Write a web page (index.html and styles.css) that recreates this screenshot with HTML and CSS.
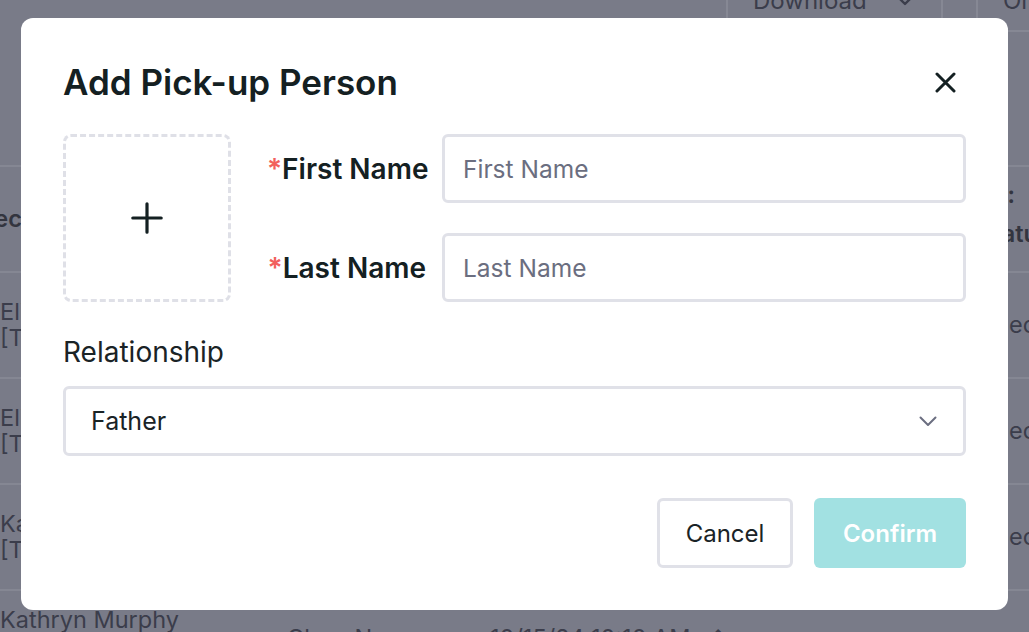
FILE: index.html
```html
<!DOCTYPE html>
<html lang="en">
<head>
<meta charset="utf-8">
<title>Add Pick-up Person</title>
<link rel="stylesheet" href="styles.css">
</head>
<body>
<div class="page" aria-hidden="true">
  <div class="toolbar">
    <div class="tb-btn download"><span>Download</span>
      <svg class="tb-chev" width="20" height="12" viewBox="0 0 20 12"><path d="M2 2 L10 10 L18 2" fill="none" stroke="#3b3d4b" stroke-width="2.4" stroke-linecap="round" stroke-linejoin="round"/></svg>
    </div>
    <div class="tb-btn other"><span>Order</span></div>
  </div>
  <div class="table">
    <div class="row head">
      <div class="c-name"><span class="shift">Selected</span></div>
      <div class="c-class">Class</div>
      <div class="c-time">Time</div>
      <div class="c-status">
        <div class="h-line1">Date:</div>
        <div>Status</div>
      </div>
    </div>
    <div class="row">
      <div class="c-name">Eliza Brown<br>[Teacher]</div>
      <div class="c-class">Class A</div>
      <div class="c-time">10/15/24</div>
      <div class="c-status">Checked</div>
    </div>
    <div class="row">
      <div class="c-name">Eliza Brown<br>[Teacher]</div>
      <div class="c-class">Class A</div>
      <div class="c-time">10/15/24</div>
      <div class="c-status">Checked</div>
    </div>
    <div class="row">
      <div class="c-name">Kathryn Lee<br>[Teacher]</div>
      <div class="c-class">Class A</div>
      <div class="c-time">10/15/24</div>
      <div class="c-status">Checked</div>
    </div>
    <div class="row last">
      <div class="c-name">Kathryn Murphy<br>[Teacher]</div>
      <div class="c-class low">Class Name</div>
      <div class="c-time low">10/15/24 10:10 AM</div>
      <div class="c-icon low">&#8963;</div>
    </div>
  </div>
</div>

<div class="overlay">
  <div class="modal" role="dialog" aria-labelledby="dlg-title">
    <div class="modal-head">
      <h1 class="title" id="dlg-title">Add Pick-up Person</h1>
      <button class="close" type="button" aria-label="Close">
        <svg width="21" height="21" viewBox="0 0 21 21"><path d="M2 2 L19 19 M19 2 L2 19" fill="none" stroke="#142022" stroke-width="3" stroke-linecap="round"/></svg>
      </button>
    </div>

    <div class="identity">
      <div class="photo">
        <svg width="32" height="32" viewBox="0 0 32 32"><path d="M16 1.8 V30.2 M1.8 16 H30.2" fill="none" stroke="#142022" stroke-width="3.2" stroke-linecap="round"/></svg>
      </div>
      <div class="name-fields">
        <label class="label" for="fn"><span class="req">*</span>First Name</label>
        <input class="input" id="fn" type="text" placeholder="First Name">
        <label class="label" for="ln"><span class="req">*</span>Last Name</label>
        <input class="input" id="ln" type="text" placeholder="Last Name">
      </div>
    </div>

    <div class="rel-label">Relationship</div>
    <div class="select">
      <span>Father</span>
      <svg width="18" height="11" viewBox="0 0 18 11"><path d="M1.5 1.5 L9 9 L16.5 1.5" fill="none" stroke="#6b6e80" stroke-width="2" stroke-linecap="round" stroke-linejoin="round"/></svg>
    </div>

    <div class="actions">
      <button class="btn cancel" type="button">Cancel</button>
      <button class="btn confirm" type="button">Confirm</button>
    </div>
  </div>
</div>
</body>
</html>
```

FILE: styles.css
```css
* { box-sizing: border-box; }

body {
  margin: 0;
  width: 1029px;
  height: 632px;
  overflow: hidden;
  position: relative;
  background: #797b88;
  font-family: Inter, "Noto Sans", "Liberation Sans", sans-serif;
}

/* dimmed page behind the dialog */
.page {
  height: 632px;
  overflow: hidden;
  color: #3b3d4b;
  font-size: 23.5px;
}

.toolbar {
  display: flex;
  align-items: flex-start;
  gap: 33px;
  padding-left: 726px;
  margin-top: -32px;
  height: 197px;
}

.tb-btn {
  height: 64px;
  border: 2px solid #868894;
  border-radius: 6px;
  display: flex;
  align-items: center;
  font-size: 24px;
  flex-shrink: 0;
}

.download { width: 217px; padding-left: 25px; gap: 28px; }
.other { width: 200px; padding-left: 25px; }

.row {
  display: flex;
  align-items: center;
  height: 106px;
  border-top: 2px solid #858793;
  line-height: 26px;
}

.row.head { font-weight: 600; color: #33353f; }

.c-name { width: 287px; flex-shrink: 0; white-space: nowrap; }
.c-class { width: 203px; flex-shrink: 0; white-space: nowrap; }
.c-time { width: 219px; flex-shrink: 0; white-space: nowrap; }
.c-icon { width: 40px; flex-shrink: 0; }
.c-status { margin-left: auto; width: 51px; white-space: nowrap; }

.row.head .c-status { line-height: 39px; padding-bottom: 10px; }
.h-line1 { display: flex; justify-content: flex-end; width: 37px; }

.shift { display: inline-block; margin-left: -41px; }

.row.last { align-items: flex-start; padding-top: 16px; }
.row.last .low { padding-top: 18px; }

/* dialog */
.overlay {
  position: absolute;
  inset: 0;
  padding: 18px 21px 22px;
  display: flex;
}

.modal {
  flex: 1;
  background: #ffffff;
  border-radius: 12px;
  padding: 44px 42px 42px 42px;
  display: flex;
  flex-direction: column;
  color: #142022;
}

.modal-head {
  display: flex;
  align-items: center;
  justify-content: space-between;
  height: 40px;
}

.title {
  margin: 0;
  font-size: 35px;
  line-height: 40px;
  font-weight: 600;
  color: #142022;
}

.close {
  width: 41px;
  height: 41px;
  padding: 0;
  border: 0;
  background: transparent;
  display: grid;
  place-items: center;
}

.identity {
  display: flex;
  gap: 36px;
  margin-top: 32px;
}

.photo {
  width: 168px;
  height: 168px;
  flex-shrink: 0;
  border: 3px dashed #dfe0e7;
  border-radius: 8px;
  display: grid;
  place-items: center;
}

.name-fields {
  flex: 1;
  display: grid;
  grid-template-columns: 159px 1fr;
  column-gap: 16px;
  row-gap: 30px;
  align-items: center;
}

.label {
  text-align: right;
  white-space: nowrap;
  font-size: 28px;
  font-weight: 600;
  color: #142022;
}

.req { color: #f2605d; }

.input {
  height: 69px;
  width: 100%;
  border: 3px solid #e0e1e8;
  border-radius: 6px;
  padding: 0 18px;
  font: 400 24.5px Inter, "Noto Sans", sans-serif;
  color: #142022;
  outline: none;
}

.input::placeholder { color: #6b6e80; }

.rel-label {
  margin-top: 33px;
  font-size: 28px;
  line-height: 34px;
  color: #1a2326;
}

.select {
  margin-top: 17px;
  height: 70px;
  border: 3px solid #e0e1e8;
  border-radius: 6px;
  padding: 0 26px 0 25px;
  display: flex;
  align-items: center;
  justify-content: space-between;
  font-size: 25px;
  color: #1a2326;
}

.actions {
  margin-top: 42px;
  display: flex;
  justify-content: flex-end;
  gap: 21px;
}

.btn {
  height: 70px;
  border-radius: 6px;
  font-family: Inter, "Noto Sans", sans-serif;
  font-size: 24px;
}

.cancel {
  width: 136px;
  border: 3px solid #e0e1e8;
  background: #ffffff;
  color: #1a2326;
  font-weight: 400;
}

.confirm {
  width: 152px;
  border: 0;
  background: #a2e1e2;
  color: #ffffff;
  font-weight: 600;
}
```
